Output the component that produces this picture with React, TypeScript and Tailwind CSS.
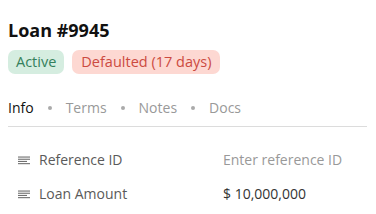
import React from "react";

function LinesIcon() {
  return (
    <svg width="12" height="9" viewBox="0 0 12 9" className="shrink-0">
      <rect x="0" y="0.5" width="12" height="1.1" fill="#707070" />
      <rect x="0" y="2.7" width="12" height="1.1" fill="#707070" />
      <rect x="0" y="4.9" width="9" height="1.1" fill="#707070" />
      <rect x="0" y="7.1" width="12" height="1.1" fill="#707070" />
    </svg>
  );
}

export default function App() {
  return (
    <div
      className="w-[376px] h-[214px] bg-white overflow-hidden px-2 pt-[18px]"
      style={{ fontFamily: '"Open Sans", sans-serif' }}
    >
      <h1 className="text-[18px] leading-[24px] font-bold text-[#111]">Loan #9945</h1>
      <div className="flex gap-[8px] mt-[8px]">
        <span className="px-[8px] h-[24px] flex items-center rounded-[7px] bg-[#d5ede0] text-[#34805c] text-[14.5px]">
          Active
        </span>
        <span className="px-[9px] h-[24px] flex items-center rounded-[7px] bg-[#fdd8d2] text-[#cc4a3f] text-[14.5px]">
          Defaulted (17 days)
        </span>
      </div>
      <div className="mt-[24px] flex items-center text-[14px] leading-[20px] border-b border-[#dcdcdc] pb-[8px] mr-[1px]">
        <span className="text-[#111]">Info</span>
        <span className="w-[4px] h-[4px] rounded-full bg-[#aaa] mx-[14px]"></span>
        <span className="text-[#999]">Terms</span>
        <span className="w-[4px] h-[4px] rounded-full bg-[#aaa] mx-[14px]"></span>
        <span className="text-[#999]">Notes</span>
        <span className="w-[4px] h-[4px] rounded-full bg-[#aaa] mx-[14px]"></span>
        <span className="text-[#999]">Docs</span>
      </div>
      <div className="mt-[23px] flex flex-col gap-[14px] text-[14px] leading-[20px]">
        <div className="flex items-center">
          <div className="w-[215px] flex items-center pl-[10px] gap-[9px] text-[#5a5a5a]">
            <LinesIcon />
            <span>Reference ID</span>
          </div>
          <span className="text-[#999]">Enter reference ID</span>
        </div>
        <div className="flex items-center">
          <div className="w-[215px] flex items-center pl-[10px] gap-[9px] text-[#5a5a5a]">
            <LinesIcon />
            <span>Loan Amount</span>
          </div>
          <span className="text-[#333]">$ 10,000,000</span>
        </div>
      </div>
    </div>
  );
}
